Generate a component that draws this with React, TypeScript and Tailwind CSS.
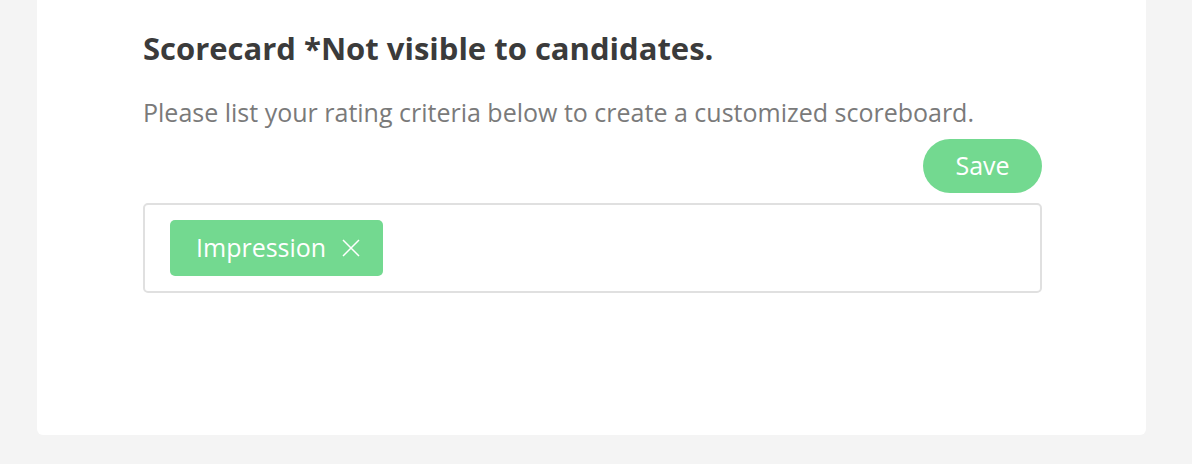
import React from "react";

export default function App() {
  return (
    <div className="w-[1192px] h-[464px] bg-[#f4f4f4] overflow-hidden" style={{ fontFamily: "'Open Sans', 'Noto Sans', sans-serif" }}>
      <div className="ml-[37px] w-[1109px] h-[435px] bg-white rounded-b-[6px] pl-[106px] pt-[28px]">
        <div className="w-[899px] flex flex-col">
          <h1 className="text-[31px] leading-[40px] font-bold text-[#3b3b3b]">Scorecard *Not visible to candidates.</h1>
          <p className="mt-[29px] text-[25px] leading-[30px] text-[#7a7a7a]">Please list your rating criteria below to create a customized scoreboard.</p>
          <div className="flex justify-end mt-[12px]">
            <button className="w-[119px] h-[54px] rounded-full bg-[#73d990] text-white text-[25px]">Save</button>
          </div>
          <div className="mt-[10px] h-[90px] border-2 border-[#e0e0e0] rounded-[5px] pl-[25px] flex items-center">
            <div className="h-[56px] w-[213px] bg-[#73d990] rounded-[5px] flex items-center pl-[26px] text-white text-[25px]">
              <span>Impression</span>
              <svg className="ml-[16px]" width="18" height="18" viewBox="0 0 18 18" fill="none" stroke="white" strokeWidth="1.5">
                <path d="M1 1L17 17M17 1L1 17" />
              </svg>
            </div>
          </div>
        </div>
      </div>
    </div>
  );
}
